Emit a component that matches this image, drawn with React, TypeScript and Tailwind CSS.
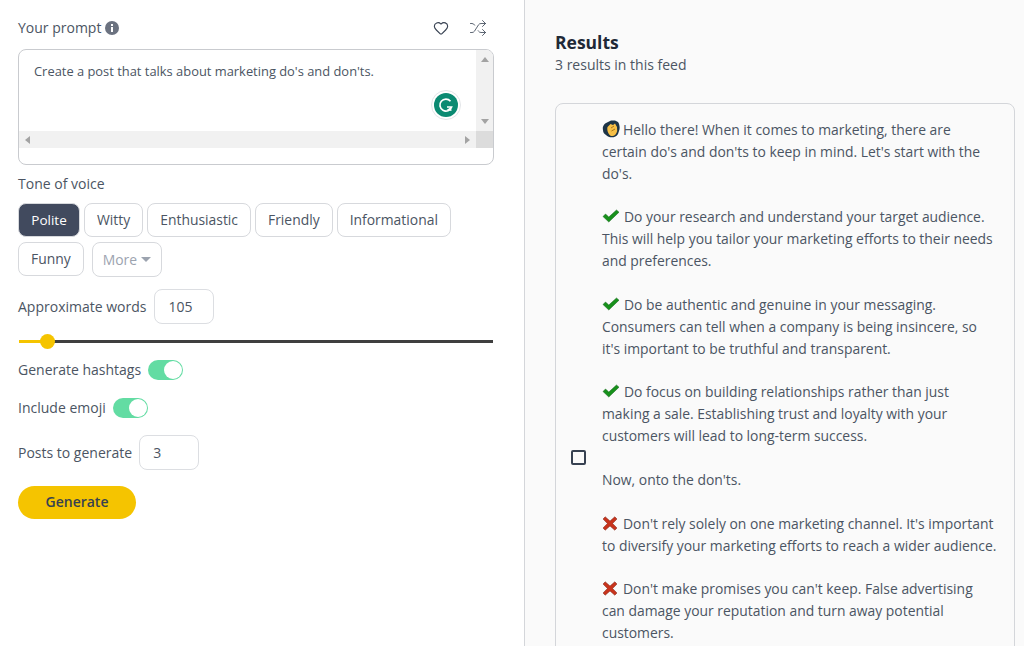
import { Heart, Shuffle } from "lucide-react"

const tones = ["Polite", "Witty", "Enthusiastic", "Friendly", "Informational", "Funny"]

function Wave() {
  return (
    <svg viewBox="0 0 18 18" className="mr-[3px] inline-block h-[18px] w-[18px] align-[-3px]">
      <path d="M1 10 C0 6 3 3 6 2 L9 0.5 L13 0.5 L16 2 C18 5 18 9 17 11 L16 14 C14 18 7 18.5 4 15 C2 14 1 12 1 10 Z" fill="#1d3446" />
      <path d="M5.5 7 L8.5 4 L11 5 L13 3.5 L15 7 L15.2 11 C14.5 14.5 12 16.5 9.5 16 C7 15.5 4.5 11 5.5 7 Z" fill="#f7c046" />
      <path d="M9 8 L12 6 M9.5 11 L13 9" stroke="#a9761c" strokeWidth="1" />
    </svg>
  )
}

function Check() {
  return (
    <svg viewBox="0 0 18 14" className="mr-[4px] inline-block h-[14px] w-[18px] align-[-1px]">
      <path d="M1 7.5 L3.5 5 L6.8 8 L14.5 1 L17 3.2 L6.8 13 Z" fill="#17911b" stroke="#14601a" strokeWidth="0.5" />
    </svg>
  )
}

function Cross() {
  return (
    <svg viewBox="0 0 16 15" className="mr-[5px] inline-block h-[15px] w-[16px] align-[-2px]">
      <path d="M1 3 L3.2 0.8 L8 5 L12.8 0.8 L15 3 L10.6 7.5 L15 12 L12.8 14.2 L8 10 L3.2 14.2 L1 12 L5.4 7.5 Z" fill="#c8331c" stroke="#7d2a1c" strokeWidth="0.5" />
    </svg>
  )
}

function Toggle() {
  return (
    <span className="flex h-[20px] w-[35px] items-center justify-end rounded-full bg-[#63dca3] pr-[1px]">
      <span className="h-[18px] w-[18px] rounded-full bg-white" />
    </span>
  )
}

function NumberBox({ value }: { value: string }) {
  return (
    <span className="flex h-[35px] w-[60px] items-center rounded-lg border border-[#dcdee2] bg-white pl-[13px] text-[#4b5563]">
      {value}
    </span>
  )
}

export default function App() {
  return (
    <div className="flex h-[646px] w-[1024px] overflow-hidden bg-white font-['Open_Sans',sans-serif] text-[14px] leading-[22px] text-[#4b5563]">
      {/* form column */}
      <div className="w-[525px] shrink-0 border-r border-[#d4d6da] pl-[18px] pr-[30px] pt-[17px]">
        <div className="flex h-[22px] items-center">
          <span>Your prompt</span>
          <svg viewBox="0 0 14 14" className="ml-[4px] h-[14px] w-[14px]">
            <circle cx="7" cy="7" r="7" fill="#6b7280" />
            <rect x="6" y="6" width="2" height="5" fill="#fff" />
            <rect x="6" y="3" width="2" height="2" fill="#fff" />
          </svg>
          <span className="ml-auto mr-[7px] flex items-center gap-[20px] text-[#374151]">
            <Heart size={16} strokeWidth={1.7} />
            <Shuffle size={18} strokeWidth={1.2} className="text-[#4b5563]" />
          </span>
        </div>

        <div className="relative mt-[10px] h-[116px] overflow-hidden rounded-lg border border-[#c9cbcf]">
          <div className="flex h-[81px]">
            <div className="flex-1 pl-[15px] pt-[10px] text-[12.9px] leading-[22px]">
              Create a post that talks about marketing do's and don'ts.
            </div>
            <div className="flex w-[17px] flex-col items-center justify-between bg-[#f1f1f1] py-[7px]">
              <span className="h-0 w-0 border-x-[4px] border-b-[5px] border-x-transparent border-b-[#a3a3a3]" />
              <span className="h-0 w-0 border-x-[4px] border-t-[5px] border-x-transparent border-t-[#a3a3a3]" />
            </div>
          </div>
          <div className="flex h-[17px] bg-[#f1f1f1]">
            <div className="flex flex-1 items-center justify-between px-[6px]">
              <span className="h-0 w-0 border-y-[4px] border-r-[5px] border-y-transparent border-r-[#a3a3a3]" />
              <span className="h-0 w-0 border-y-[4px] border-l-[5px] border-y-transparent border-l-[#a3a3a3]" />
            </div>
            <div className="w-[17px] bg-[#dcdcdc]" />
          </div>
          {/* grammarly badge */}
          <div className="absolute left-[412px] top-[40px] flex h-[30px] w-[30px] items-center justify-center rounded-full border border-[#e3e5e8] bg-white">
            <svg viewBox="0 0 24 24" className="h-[24px] w-[24px]">
              <circle cx="12" cy="12" r="12" fill="#0b8a72" />
              <path d="M16.5 8.2 A6 6 0 1 0 17.6 14 L13 14" fill="none" stroke="#fff" strokeWidth="1.7" />
              <path d="M12.5 17 L17 14 L17.5 18 Z" fill="#fff" />
            </svg>
          </div>
        </div>

        <div className="mt-[8px]">Tone of voice</div>
        <div className="mt-[8px] flex flex-wrap gap-x-[4px] gap-y-[5px]">
          {tones.map((tone) => (
            <span
              key={tone}
              className={
                tone === "Polite"
                  ? "flex h-[34px] w-[62px] items-center justify-center rounded-lg border border-[#d7d9dd] bg-[#414a5e] text-[13.5px] font-medium text-white"
                  : "flex h-[34px] items-center rounded-lg border border-[#d7d9dd] bg-white px-[12px] text-[13.9px]"
              }
            >
              {tone}
            </span>
          ))}
          <span className="ml-[4px] flex h-[35px] items-center gap-[4px] rounded-lg border border-[#d7d9dd] px-[10px] text-[13.9px] text-[#9ca3af]">
            More
            <span className="h-0 w-0 border-x-[5px] border-t-[5px] border-x-transparent border-t-[#9ca3af]" />
          </span>
        </div>

        <div className="mt-[12px] flex items-center gap-[8px]">
          <span>Approximate words</span>
          <NumberBox value="105" />
        </div>

        {/* slider */}
        <div className="relative ml-[1px] mt-[10px] h-[16px] w-[474px]">
          <div className="absolute left-0 top-[6px] h-[3px] w-full bg-[#3f3f3f]" />
          <div className="absolute left-0 top-[6px] h-[3px] w-[28px] bg-[#f5c400]" />
          <div className="absolute left-[21px] top-0 h-[15px] w-[15px] rounded-full bg-[#f5c400]" />
        </div>

        <div className="mt-[10px] flex h-[20px] items-center gap-[7px]">
          <span>Generate hashtags</span>
          <Toggle />
        </div>
        <div className="mt-[18px] flex h-[20px] items-center gap-[7px]">
          <span>Include emoji</span>
          <Toggle />
        </div>
        <div className="mt-[17px] flex items-center gap-[7px]">
          <span>Posts to generate</span>
          <NumberBox value="3" />
        </div>
        <button className="mt-[16px] h-[33px] w-[118px] rounded-full bg-[#f5c400] pb-[2px] font-semibold text-[#374151]">
          Generate
        </button>
      </div>

      {/* results column */}
      <div className="flex-1 bg-[#fafafa] pl-[30px] pr-[9px] pt-[30px]">
        <div className="text-[17.5px] font-bold leading-[24px] text-[#1f2937]">Results</div>
        <div className="mt-[1px] leading-[20px]">3 results in this feed</div>
        <div className="mt-[28px] flex h-[710px] items-center rounded-lg border border-[#d4d6da] bg-[#fafafa]">
          <span className="mb-[1px] ml-[15px] h-[15px] w-[15px] shrink-0 rounded-[2px] border-2 border-[#374151]" />
          <div className="ml-[16px] w-[396px] self-start pt-[15px] text-[13.9px] leading-[21.87px]">
            <p><Wave />Hello there! When it comes to marketing, there are certain do's and don'ts to keep in mind. Let's start with the do's.</p>
            <p className="mt-[21.87px]"><Check />Do your research and understand your target audience. This will help you tailor your marketing efforts to their needs and preferences.</p>
            <p className="mt-[21.87px]"><Check />Do be authentic and genuine in your messaging. Consumers can tell when a company is being insincere, so it's important to be truthful and transparent.</p>
            <p className="mt-[21.87px]"><Check />Do focus on building relationships rather than just making a sale. Establishing trust and loyalty with your customers will lead to long-term success.</p>
            <p className="mt-[21.87px]">Now, onto the don'ts.</p>
            <p className="mt-[21.87px]"><Cross />Don't rely solely on one marketing channel. It's important to diversify your marketing efforts to reach a wider audience.</p>
            <p className="mt-[21.87px]"><Cross />Don't make promises you can't keep. False advertising can damage your reputation and turn away potential customers.</p>
          </div>
        </div>
      </div>
    </div>
  )
}
